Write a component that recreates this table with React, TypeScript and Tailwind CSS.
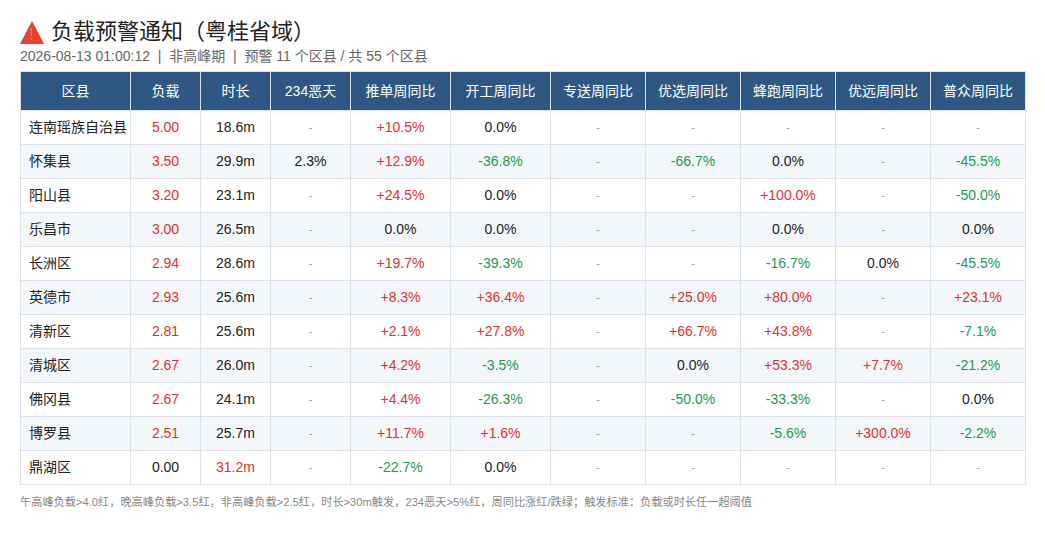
const cols = [
  { name: "区县", w: "w-[110px]" },
  { name: "负载", w: "w-[70px]" },
  { name: "时长", w: "w-[70px]" },
  { name: "234恶天", w: "w-[80px]" },
  { name: "推单周同比", w: "w-[100px]" },
  { name: "开工周同比", w: "w-[100px]" },
  { name: "专送周同比", w: "w-[95px]" },
  { name: "优选周同比", w: "w-[95px]" },
  { name: "蜂跑周同比", w: "w-[95px]" },
  { name: "优远周同比", w: "w-[95px]" },
  { name: "普众周同比", w: "w-[95px]" },
];

type Row = { area: string; load: string; loadHot: boolean; dur: string; durHot: boolean; rest: string[] };

const rows: Row[] = [
  { area: "连南瑶族自治县", load: "5.00", loadHot: true, dur: "18.6m", durHot: false, rest: ["-", "+10.5%", "0.0%", "-", "-", "-", "-", "-"] },
  { area: "怀集县", load: "3.50", loadHot: true, dur: "29.9m", durHot: false, rest: ["2.3%", "+12.9%", "-36.8%", "-", "-66.7%", "0.0%", "-", "-45.5%"] },
  { area: "阳山县", load: "3.20", loadHot: true, dur: "23.1m", durHot: false, rest: ["-", "+24.5%", "0.0%", "-", "-", "+100.0%", "-", "-50.0%"] },
  { area: "乐昌市", load: "3.00", loadHot: true, dur: "26.5m", durHot: false, rest: ["-", "0.0%", "0.0%", "-", "-", "0.0%", "-", "0.0%"] },
  { area: "长洲区", load: "2.94", loadHot: true, dur: "28.6m", durHot: false, rest: ["-", "+19.7%", "-39.3%", "-", "-", "-16.7%", "0.0%", "-45.5%"] },
  { area: "英德市", load: "2.93", loadHot: true, dur: "25.6m", durHot: false, rest: ["-", "+8.3%", "+36.4%", "-", "+25.0%", "+80.0%", "-", "+23.1%"] },
  { area: "清新区", load: "2.81", loadHot: true, dur: "25.6m", durHot: false, rest: ["-", "+2.1%", "+27.8%", "-", "+66.7%", "+43.8%", "-", "-7.1%"] },
  { area: "清城区", load: "2.67", loadHot: true, dur: "26.0m", durHot: false, rest: ["-", "+4.2%", "-3.5%", "-", "0.0%", "+53.3%", "+7.7%", "-21.2%"] },
  { area: "佛冈县", load: "2.67", loadHot: true, dur: "24.1m", durHot: false, rest: ["-", "+4.4%", "-26.3%", "-", "-50.0%", "-33.3%", "-", "0.0%"] },
  { area: "博罗县", load: "2.51", loadHot: true, dur: "25.7m", durHot: false, rest: ["-", "+11.7%", "+1.6%", "-", "-", "-5.6%", "+300.0%", "-2.2%"] },
  { area: "鼎湖区", load: "0.00", loadHot: false, dur: "31.2m", durHot: true, rest: ["-", "-22.7%", "0.0%", "-", "-", "-", "-", "-"] },
];

function Cell({ v }: { v: string }) {
  if (v === "-") return <td className="border border-[#dde2ea] text-center text-[11px] text-[#999]">-</td>;
  const color = v.startsWith("+") ? "text-[#e0312f]" : v.startsWith("-") ? "text-[#22994f]" : "text-[#222]";
  return <td className={`border border-[#dde2ea] text-center ${color}`}>{v}</td>;
}

function WarnIcon() {
  return (
    <svg width="24" height="23" viewBox="0 0 24 23" className="shrink-0">
      <polygon points="12,0 24,23 0,23" fill="#e8412d" />
      <rect x="10.6" y="7" width="1.4" height="8" fill="#f2887a" />
      <rect x="10.6" y="17" width="1.4" height="1.5" fill="#f2887a" />
    </svg>
  );
}

export default function App() {
  return (
    <div
      className="min-h-[534px] bg-white px-5 pt-[17px] text-[#222]"
      style={{ fontFamily: '"Liberation Sans", "Noto Sans CJK SC", sans-serif' }}
    >
      <div className="flex items-center gap-[7px]">
        <WarnIcon />
        <h1 className="text-[22px] leading-[30px] text-[#222]">负载预警通知（粤桂省域）</h1>
      </div>
      <p className="-mt-[1px] text-[14px] leading-[20px] text-[#666] whitespace-pre">
        2026-08-13 01:00:12  |  非高峰期  |  预警 11 个区县 / 共 55 个区县
      </p>
      <table className="mt-[5px] w-[1005px] table-fixed border-collapse text-[14px]">
        <colgroup>
          {cols.map((c) => (
            <col key={c.name} className={c.w} />
          ))}
        </colgroup>
        <thead>
          <tr className="h-[39px] bg-[#2d5883] text-white">
            {cols.map((c) => (
              <th key={c.name} className="border border-[#dde2ea] font-normal">
                {c.name}
              </th>
            ))}
          </tr>
        </thead>
        <tbody>
          {rows.map((r, i) => (
            <tr key={r.area} className={`h-[34px] ${i % 2 === 1 ? "bg-[#f4f7fa]" : "bg-white"}`}>
              <td className="border border-[#dde2ea] pl-2 text-[#222]">{r.area}</td>
              <td className={`border border-[#dde2ea] text-center ${r.loadHot ? "text-[#e0312f]" : "text-[#222]"}`}>{r.load}</td>
              <td className={`border border-[#dde2ea] text-center ${r.durHot ? "text-[#e0312f]" : "text-[#222]"}`}>{r.dur}</td>
              {r.rest.map((v, j) => (
                <Cell key={j} v={v} />
              ))}
            </tr>
          ))}
        </tbody>
      </table>
      <p className="mt-[9px] text-[11.2px] leading-[16px] text-[#888]">
        午高峰负载&gt;4.0红，晚高峰负载&gt;3.5红，非高峰负载&gt;2.5红，时长&gt;30m触发，234恶天&gt;5%红，周同比涨红/跌绿；触发标准：负载或时长任一超阈值
      </p>
    </div>
  );
}
